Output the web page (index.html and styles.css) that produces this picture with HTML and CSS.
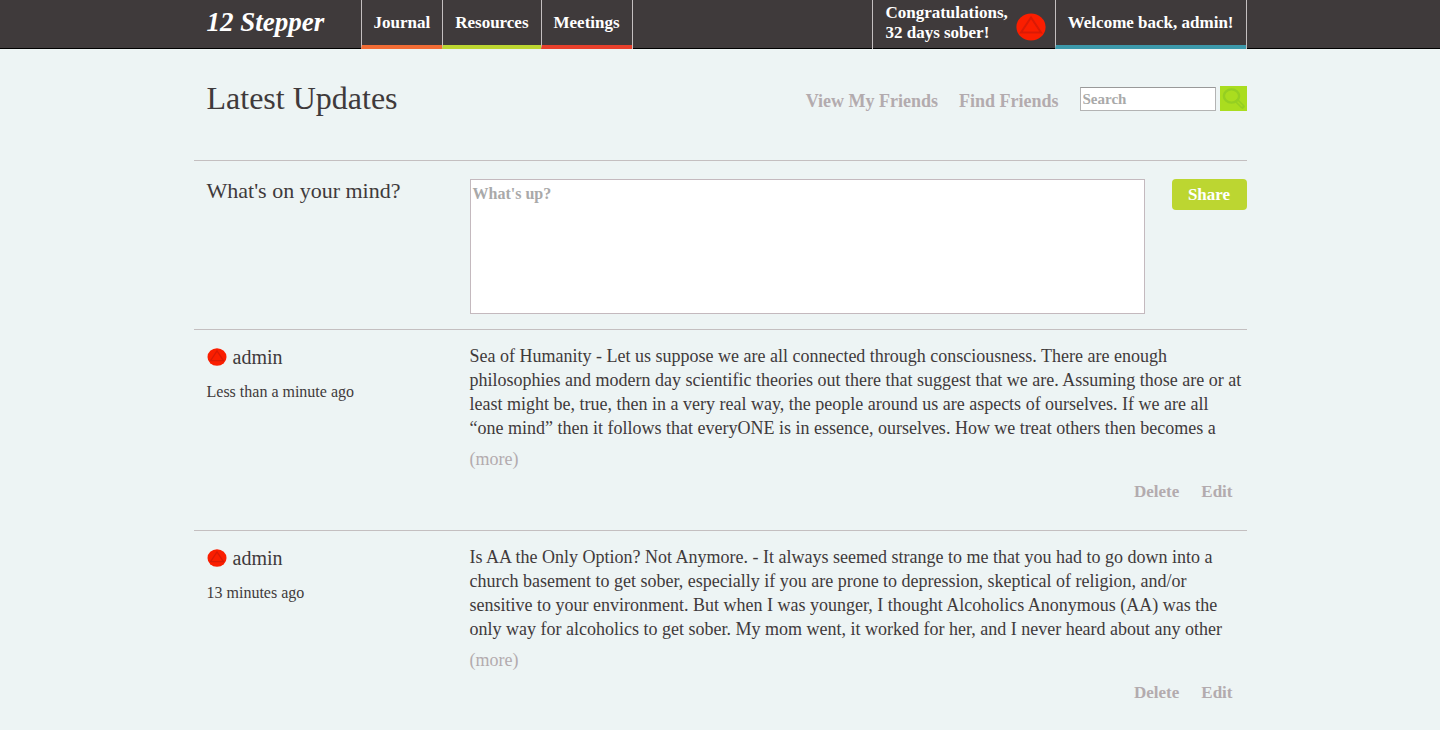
FILE: index.html
```html
<!DOCTYPE html>
<html lang="en">
<head>
<meta charset="utf-8">
<meta name="viewport" content="width=device-width, initial-scale=1">
<title>12 Stepper</title>
<link rel="stylesheet" href="styles.css">
</head>
<body>
<header class="topbar">
  <div class="wrap topbar-inner">
    <a class="logo" href="#">12 Stepper</a>
    <nav class="nav">
      <a class="nav-item orange" href="#">Journal</a>
      <a class="nav-item lime" href="#">Resources</a>
      <a class="nav-item red" href="#">Meetings</a>
    </nav>
    <div class="account">
      <div class="sober">
        <span>Congratulations,<br>32 days sober!</span>
        <svg class="chip" viewBox="0 0 30 28" aria-hidden="true"><ellipse cx="15" cy="14" rx="14.6" ry="13.6" fill="#fa1e00"/><path d="M15 4.5 L25 19.5 H5 Z" fill="none" stroke="#d91a05" stroke-width="2"/></svg>
      </div>
      <a class="nav-item teal" href="#">Welcome back, admin!</a>
    </div>
  </div>
</header>
<main class="wrap">
  <section class="heading">
    <h1>Latest Updates</h1>
    <div class="tools">
      <a href="#">View My Friends</a>
      <a href="#">Find Friends</a>
      <form class="search">
        <input type="text" placeholder="Search" aria-label="Search">
        <button type="button" aria-label="Search"><svg viewBox="0 0 27 25" fill="none" stroke="#95cf22" aria-hidden="true"><ellipse cx="11.5" cy="10" rx="7.6" ry="6.6" stroke-width="2.4"/><path d="M17.5 15.5 L22.5 20.5" stroke-width="4.5" stroke-linecap="round"/><path d="M18 16 L22 20" stroke="#a8db20" stroke-width="1.4" stroke-linecap="round"/></svg></button>
      </form>
    </div>
  </section>
  <form class="row compose">
    <label class="side" for="mind">What's on your mind?</label>
    <textarea id="mind" placeholder="What's up?"></textarea>
    <button type="button" class="share">Share</button>
  </form>
  <article class="row post">
    <div class="side">
      <a class="user" href="#"><svg viewBox="0 0 30 28" aria-hidden="true"><ellipse cx="15" cy="14" rx="14.8" ry="13.8" fill="#fa1e00"/><path d="M15 4.5 L25 19.5 H5 Z" fill="none" stroke="#d91a05" stroke-width="2"/></svg>admin</a>
      <div class="time">Less than a minute ago</div>
    </div>
    <div class="content">
      <p>Sea of Humanity - Let us suppose we are all connected through consciousness. There are enough<br>philosophies and modern day scientific theories out there that suggest that we are. Assuming those are or at<br>least might be, true, then in a very real way, the people around us are aspects of ourselves. If we are all<br>“one mind” then it follows that everyONE is in essence, ourselves. How we treat others then becomes a</p>
      <a class="more" href="#">(more)</a>
      <div class="actions"><a href="#">Delete</a><a href="#">Edit</a></div>
    </div>
  </article>
  <article class="row post">
    <div class="side">
      <a class="user" href="#"><svg viewBox="0 0 30 28" aria-hidden="true"><ellipse cx="15" cy="14" rx="14.8" ry="13.8" fill="#fa1e00"/><path d="M15 4.5 L25 19.5 H5 Z" fill="none" stroke="#d91a05" stroke-width="2"/></svg>admin</a>
      <div class="time">13 minutes ago</div>
    </div>
    <div class="content">
      <p>Is AA the Only Option? Not Anymore. - It always seemed strange to me that you had to go down into a<br>church basement to get sober, especially if you are prone to depression, skeptical of religion, and/or<br>sensitive to your environment. But when I was younger, I thought Alcoholics Anonymous (AA) was the<br>only way for alcoholics to get sober. My mom went, it worked for her, and I never heard about any other</p>
      <a class="more" href="#">(more)</a>
      <div class="actions"><a href="#">Delete</a><a href="#">Edit</a></div>
    </div>
  </article>
</main>
</body>
</html>
```

FILE: styles.css
```css
* { box-sizing: border-box; }
body {
  margin: 0;
  background: #edf4f4;
  color: #3f3a3b;
  font-family: "Liberation Serif", "Times New Roman", serif;
  font-size: 18px;
  line-height: 24px;
}
a { color: inherit; text-decoration: none; }
input, textarea, button { font-family: inherit; }
.wrap { max-width: 1053px; margin: 0 auto; }

.topbar { background: linear-gradient(#3f3a3b 0 48px, #000 48px); color: #fff; font-size: 17px; font-weight: bold; }
.topbar-inner { display: flex; height: 49px; }
.logo {
  width: 167px;
  padding-left: 13px;
  font-size: 27px;
  font-style: italic;
  line-height: 44px;
  white-space: nowrap;
}
.nav, .account { display: flex; }
.account { margin-left: auto; border-right: 1px solid #c4bfc0; }
.nav { border-right: 1px solid #c4bfc0; }
.nav-item {
  padding: 11px 12px 0;
  line-height: 24px;
  border-left: 1px solid #c4bfc0;
  border-bottom: 4px solid;
  white-space: nowrap;
}
.orange { border-bottom-color: #f26c35; }
.lime { border-bottom-color: #bcd631; }
.red { border-bottom-color: #e8402c; }
.teal { border-bottom-color: #3c99ab; }
.sober {
  display: flex;
  gap: 8px;
  padding: 3px 9px 0 12px;
  border-left: 1px solid #c4bfc0;
  line-height: 20px;
  white-space: nowrap;
}
.chip { width: 30px; height: 28px; margin-top: 10px; }

.heading { display: flex; justify-content: space-between; height: 111px; padding: 28px 0 0 13px; }
h1 { margin: 0; font-size: 32px; line-height: 42px; font-weight: normal; }
.tools { display: flex; gap: 21px; padding-top: 9px; color: #b3abae; font-size: 18px; font-weight: bold; line-height: 30px; }
.search { display: flex; gap: 4px; }
.search input {
  width: 136px;
  height: 24px;
  margin-top: 1px;
  padding: 0 2px;
  border: 1px solid #b3b3b3;
  border-top-color: #999;
  background: #fff;
  font-size: 15px;
  font-weight: bold;
}
::placeholder { color: #a9a9a9; opacity: 1; }
.search button { width: 27px; height: 25px; padding: 0; border: 0; background: #aadd1f; }
.search svg { display: block; width: 27px; height: 25px; }

.row { display: flex; border-top: 1px solid #c4bfc0; padding-left: 13px; }
.side { flex: none; width: 263px; }
.compose { height: 169px; padding-top: 18px; }
.compose .side { font-size: 22px; }
textarea {
  flex: 1;
  height: 135px;
  padding: 2px;
  border: 1px solid #c4b9be;
  background: #fff;
  font-size: 16px;
  font-weight: bold;
  line-height: 24px;
  resize: none;
}
.share {
  width: 75px;
  height: 31px;
  margin-left: 27px;
  padding: 0;
  border: 0;
  border-radius: 4px;
  background: #bcd631;
  color: #fff;
  font-size: 17px;
  font-weight: bold;
}
.post { padding-top: 14px; padding-bottom: 26px; }
.post:last-child { padding-bottom: 0; }
.post .side { padding-top: 1px; }
.user { display: flex; align-items: center; gap: 6px; font-size: 20px; }
.user svg { width: 20px; height: 18px; }
.time { margin-top: 11px; font-size: 16px; }
.content { flex: 1; }
p { margin: 0 0 7px; white-space: nowrap; }
.more { display: block; color: #b3abae; }
.actions { display: flex; justify-content: flex-end; gap: 22px; margin-top: 9px; padding-right: 14px; color: #b3abae; font-size: 17px; font-weight: bold; }
```
